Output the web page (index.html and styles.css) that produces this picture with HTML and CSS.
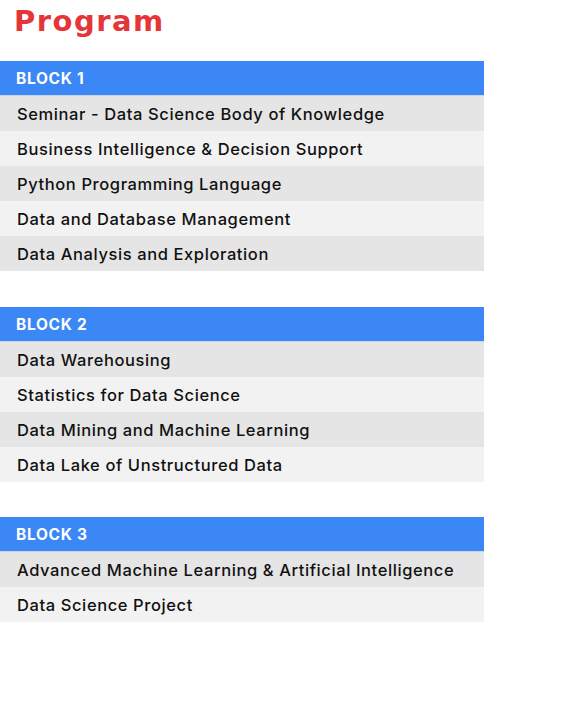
FILE: index.html
```html
<!DOCTYPE html>
<html>
<head>
<meta charset="utf-8">
<link rel="stylesheet" href="styles.css">
</head>
<body>
<h1 class="title">Program</h1>
<section class="block">
  <div class="block-head">BLOCK 1</div>
  <div class="row">Seminar - Data Science Body of Knowledge</div>
  <div class="row">Business Intelligence &amp; Decision Support</div>
  <div class="row">Python Programming Language</div>
  <div class="row">Data and Database Management</div>
  <div class="row">Data Analysis and Exploration</div>
</section>
<section class="block">
  <div class="block-head">BLOCK 2</div>
  <div class="row">Data Warehousing</div>
  <div class="row">Statistics for Data Science</div>
  <div class="row">Data Mining and Machine Learning</div>
  <div class="row">Data Lake of Unstructured Data</div>
</section>
<section class="block">
  <div class="block-head">BLOCK 3</div>
  <div class="row">Advanced Machine Learning &amp; Artificial Intelligence</div>
  <div class="row">Data Science Project</div>
</section>
</body>
</html>
```
FILE: styles.css
```css
body {
  margin: 0;
  background: #fff;
  font-family: Inter, "Noto Sans", sans-serif;
}
.title {
  margin: 0;
  padding: 1px 0 0 14px;
  height: 61px;
  box-sizing: border-box;
  font-family: "DejaVu Sans", sans-serif;
  font-size: 29px;
  font-weight: 700;
  letter-spacing: 1.5px;
  color: #e63539;
  line-height: 40px;
}
.block {
  width: 484px;
  margin-bottom: 36px;
}
.block:nth-of-type(2) {
  margin-bottom: 35px;
}
.block-head {
  height: 35px;
  box-sizing: border-box;
  background: #3a87f5;
  color: #fff;
  font-weight: 700;
  font-size: 15.5px;
  letter-spacing: 0.7px;
  padding-left: 16px;
  display: flex;
  align-items: center;
  border-bottom: 1px solid #c9d6ea;
}
.row {
  height: 35px;
  display: flex;
  align-items: center;
  padding-left: 17px;
  font-size: 16.5px;
  font-weight: 500;
  letter-spacing: 0.6px;
  color: #111;
  background: #e5e5e5;
}
.row:nth-child(odd) {
  background: #f2f2f2;
}
```
